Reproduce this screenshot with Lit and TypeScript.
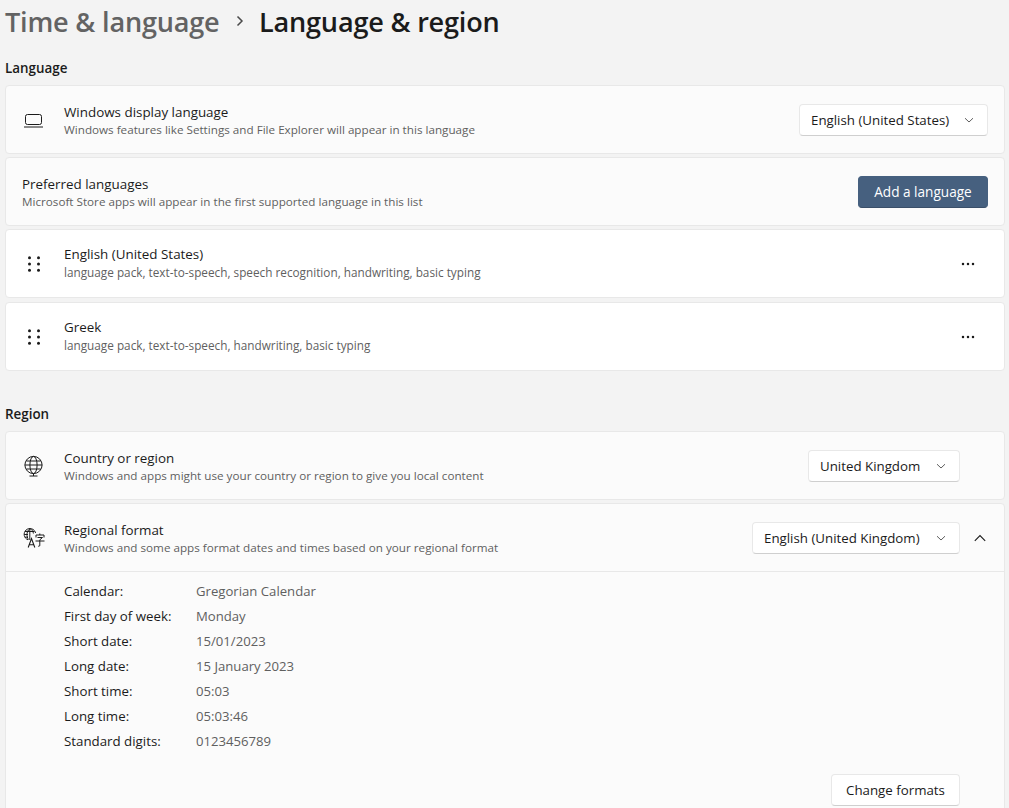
import { LitElement, html, css } from "lit";
import { customElement } from "lit/decorators.js";

const chevDown = html`<svg class="chev" width="10" height="10" viewBox="0 0 10 10"><path d="M1 3.2 5 7l4-3.8" fill="none" stroke="#5f5f5f" stroke-width="1"/></svg>`;
const laptop = html`<svg class="ic2" width="20" height="16" viewBox="0 0 20 16"><rect x="1.500" y="2.500" width="16" height="10" rx="2" fill="none" stroke="#1b1b1b" stroke-width="1"/><path d="M0 15h19" stroke="#1b1b1b" stroke-width="1"/></svg>`;
const globe = html`<svg class="ic1" width="22" height="22" viewBox="0 0 22 22" fill="none" stroke="#1b1b1b" stroke-width="1"><circle cx="10.500" cy="10" r="8.600"/><ellipse cx="10.500" cy="10" rx="3.600" ry="8.600"/><path d="M1.900 10h17.200M3.200 6h14.600M3.200 14h14.600M10.500 18.600V21M6.500 21h8"/></svg>`;
const regional = html`<svg class="ic1" width="22" height="22" viewBox="0 0 22 22" fill="none" stroke="#1b1b1b" stroke-width="1"><path d="M5 12.800A5.800 5.800 0 1 1 12.600 6"/><path d="M6.800 13V1.700M7 1.700C4.500 3 4 6 4 7.500s.3 3.500 1.500 5M7 1.700c2 .8 3.200 2.800 3.400 4.800M1.200 7.500H5M2 4.500h9.500M2 10.200h3"/><path d="M5.200 20.500 8.500 11.500l3.300 9M6.300 17.700h4.400" stroke-width="1.100"/><path d="M16.800 6.500v1.500M13 10.500V8h8v2.500M14.500 10.500h5l-2.700 2.300v6l-1.600.5M12.500 14h9"/></svg>`;
const grip = html`<svg class="ic6" width="12" height="16" viewBox="0 0 12 16" fill="#1b1b1b"><circle cx="1.500" cy="1.800" r="1.500"/><circle cx="10.500" cy="1.800" r="1.500"/><circle cx="1.500" cy="8" r="1.500"/><circle cx="10.500" cy="8" r="1.500"/><circle cx="1.500" cy="14.200" r="1.500"/><circle cx="10.500" cy="14.200" r="1.500"/></svg>`;
const more = html`<svg width="14" height="4" viewBox="0 0 14 4" fill="#1b1b1b"><circle cx="2" cy="2" r="1.250"/><circle cx="7" cy="2" r="1.250"/><circle cx="12" cy="2" r="1.250"/></svg>`;

const formats: [string, string][] = [
  ["Calendar:", "Gregorian Calendar"],
  ["First day of week:", "Monday"],
  ["Short date:", "15/01/2023"],
  ["Long date:", "15 January 2023"],
  ["Short time:", "05:03"],
  ["Long time:", "05:03:46"],
  ["Standard digits:", "0123456789"],
];

@customElement("app-root")
export class AppRoot extends LitElement {
  static styles = css`
    :host {
      display: block;
      height: 808px;
      overflow: hidden;
      background: #f3f3f3;
      font-family: "Open Sans", "Noto Sans", sans-serif;
      font-size: 13.3px;
      color: #1b1b1b;
      padding: 0 4px 0 5px;
      box-sizing: border-box;
    }
    .crumb {
      display: flex;
      align-items: center;
      height: 42px;
      font-size: 27.1px;
      font-weight: 600;
      letter-spacing: -0.2px;
      white-space: nowrap;
    }
    .parent { color: #636363; width: 223px; }
    .sep { width: 31px; box-sizing: border-box; padding-left: 6px; display: flex; }
    .h2 { font-size: 13.4px; font-weight: 600; height: 43px; box-sizing: border-box; padding-top: 8px; display: flex; align-items: center; }
    .h2.region { height: 57px; padding-top: 23px; }
    .card {
      background: #fbfbfb;
      border: 1px solid #e8e8e8;
      border-radius: 4px;
      margin-bottom: 3px;
      box-sizing: border-box;
    }
    .card.white { background: #fff; }
    .card.gap4 { margin-bottom: 4px; }
    .row { display: flex; align-items: center; height: 67px; box-sizing: border-box; padding-left: 16px; }
    .row.bordered { height: 68px; border-bottom: 1px solid #e8e8e8; }
    .icon { width: 42px; flex: none; display: flex; align-items: center; }
    .ic1 { margin-left: 1px; }
    .ic2 { margin-left: 2px; }
    .ic6 { margin-left: 6px; }
    .text { flex: 1; min-width: 0; padding-top: 1px; }
    .white .text { padding-top: 0; margin-bottom: 3px; }
    .title { font-size: 13.4px; line-height: 18px; }
    .sub { font-size: 11.68px; line-height: 16px; margin-top: 1px; color: #5f5f5f; }
    .white .sub { font-size: 11.78px; }
    .btn {
      display: flex;
      align-items: center;
      height: 32px;
      box-sizing: border-box;
      background: #fff;
      border: 1px solid #e8e8e8;
      border-bottom-color: #cfcfcf;
      border-radius: 4px;
      white-space: nowrap;
      flex: none;
    }
    .select { justify-content: space-between; padding: 0 13px 0 11px; }
    .right { margin-right: 16px; }
    .right2 { margin-right: 44px; }
    .w189 { width: 189px; }
    .w152 { width: 152px; }
    .w208 { width: 208px; margin-right: 14px; }
    .accent {
      width: 130px;
      justify-content: center;
      background: #46607f;
      border-color: #46607f;
      border-bottom-color: #3a4f69;
      color: #fff;
      margin-right: 16px;
      font-size: 13.6px;
    }
    .morebtn { width: 14px; margin-right: 29px; display: flex; }
    .upchev { display: flex; margin-right: 18px; }
    .details { padding: 6px 0 20px 58px; }
    .kv { display: flex; height: 25px; align-items: center; }
    .k { width: 132px; }
    .v { color: #5f5f5f; font-size: 13.15px; }
    .actions { display: flex; justify-content: flex-end; padding: 21px 44px 0 0; }
    .change { width: 129px; justify-content: center; }
  `;

  render() {
    return html`
      <div class="crumb">
        <span class="parent">Time &amp; language</span>
        <span class="sep"><svg width="12" height="12" viewBox="0 0 12 12"><path d="M3.500 1.500 8 6l-4.500 4.500" fill="none" stroke="#4a4a4a" stroke-width="1.500"/></svg></span>
        <span>Language &amp; region</span>
      </div>
      <div class="h2">Language</div>
      <div class="card"><div class="row">
        <div class="icon">${laptop}</div>
        <div class="text"><div class="title">Windows display language</div><div class="sub">Windows features like Settings and File Explorer will appear in this language</div></div>
        <div class="btn select w189 right"><span>English (United States)</span>${chevDown}</div>
      </div></div>
      <div class="card"><div class="row">
        <div class="text"><div class="title">Preferred languages</div><div class="sub">Microsoft Store apps will appear in the first supported language in this list</div></div>
        <div class="btn accent">Add a language</div>
      </div></div>
      <div class="card white gap4"><div class="row">
        <div class="icon">${grip}</div>
        <div class="text"><div class="title">English (United States)</div><div class="sub">language pack, text-to-speech, speech recognition, handwriting, basic typing</div></div>
        <div class="morebtn">${more}</div>
      </div></div>
      <div class="card white"><div class="row">
        <div class="icon">${grip}</div>
        <div class="text"><div class="title">Greek</div><div class="sub">language pack, text-to-speech, handwriting, basic typing</div></div>
        <div class="morebtn">${more}</div>
      </div></div>
      <div class="h2 region">Region</div>
      <div class="card"><div class="row">
        <div class="icon">${globe}</div>
        <div class="text"><div class="title">Country or region</div><div class="sub">Windows and apps might use your country or region to give you local content</div></div>
        <div class="btn select w152 right2"><span>United Kingdom</span>${chevDown}</div>
      </div></div>
      <div class="card">
        <div class="row bordered">
          <div class="icon">${regional}</div>
          <div class="text"><div class="title">Regional format</div><div class="sub">Windows and some apps format dates and times based on your regional format</div></div>
          <div class="btn select w208"><span>English (United Kingdom)</span>${chevDown}</div>
          <div class="upchev"><svg width="12" height="8" viewBox="0 0 12 8"><path d="M.8 6.800 6 1.600l5.200 5.200" fill="none" stroke="#1b1b1b" stroke-width="1.100"/></svg></div>
        </div>
        <div class="details">
          ${formats.map(([k, v]) => html`<div class="kv"><span class="k">${k}</span><span class="v">${v}</span></div>`)}
          <div class="actions"><div class="btn change">Change formats</div></div>
        </div>
      </div>
    `;
  }
}
